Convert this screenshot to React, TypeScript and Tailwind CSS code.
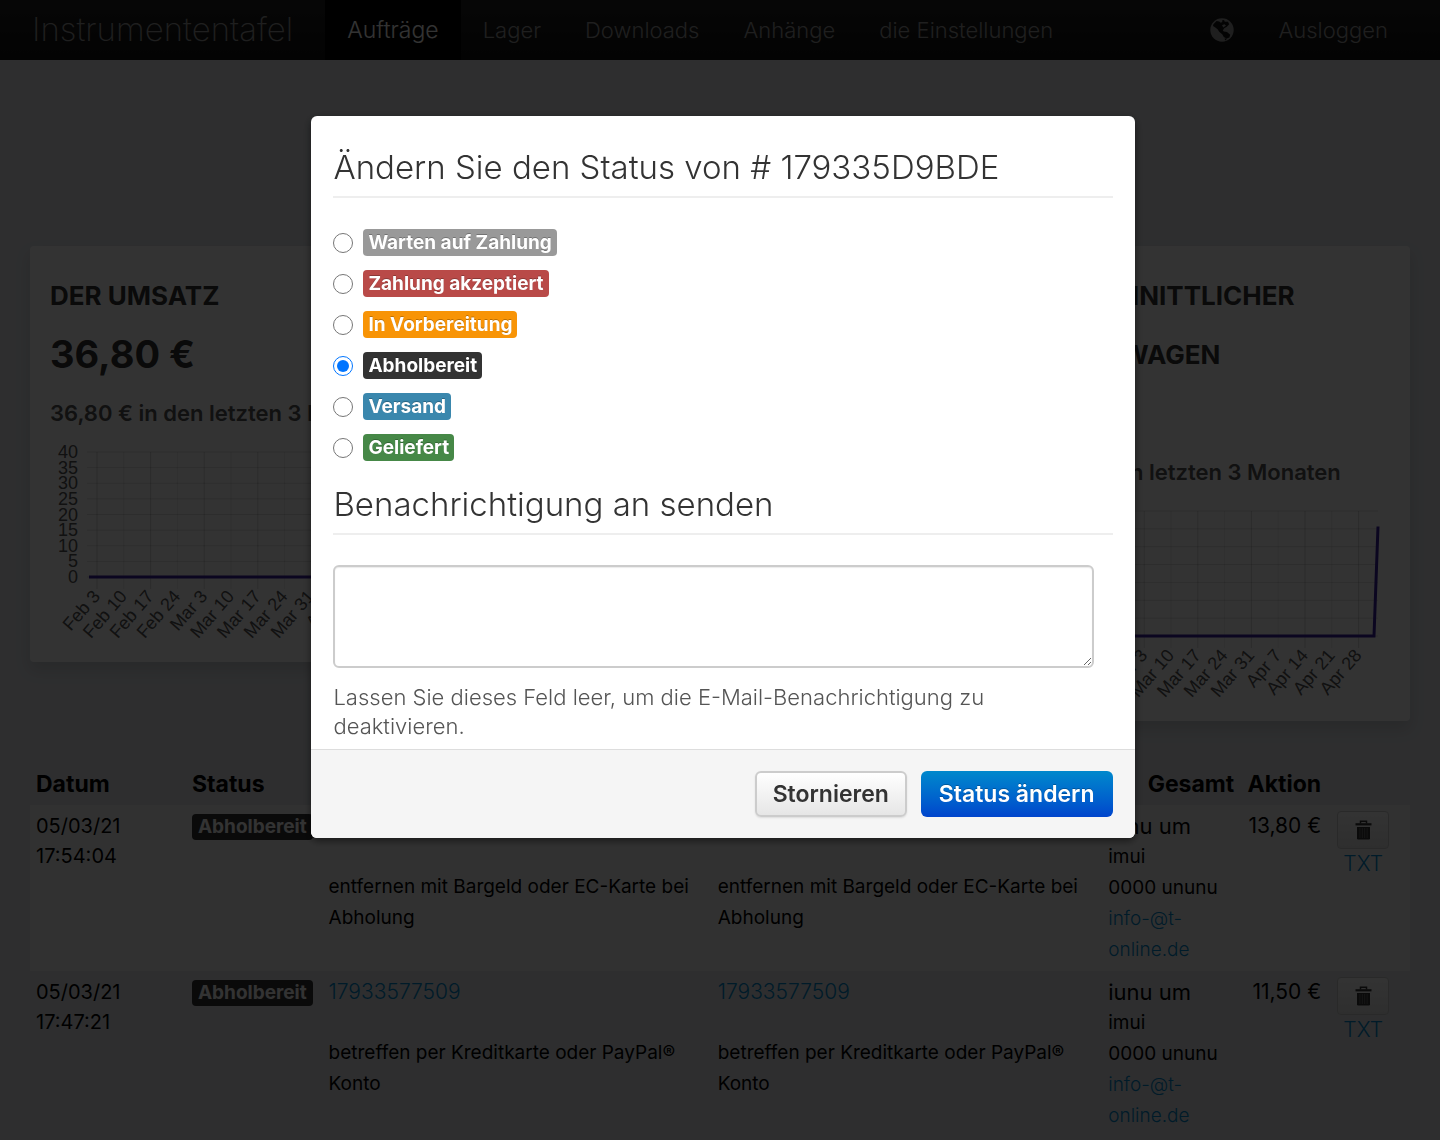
import { useState } from "react";

const navItems = ["Lager", "Downloads", "Anhänge", "die Einstellungen"];

const statuses = [
  { label: "Warten auf Zahlung", color: "bg-[#999999]" },
  { label: "Zahlung akzeptiert", color: "bg-[#b94a48]" },
  { label: "In Vorbereitung", color: "bg-[#f89406]" },
  { label: "Abholbereit", color: "bg-[#333333]" },
  { label: "Versand", color: "bg-[#3a87ad]" },
  { label: "Geliefert", color: "bg-[#468847]" },
];

const weeks = [
  "Feb 3", "Feb 10", "Feb 17", "Feb 24", "Mar 3", "Mar 10", "Mar 17",
  "Mar 24", "Mar 31", "Apr 7", "Apr 14", "Apr 21", "Apr 28",
];

const orders = [
  {
    date: "05/03/21",
    time: "17:54:04",
    id: "179335D9BDE",
    note: "entfernen mit Bargeld oder EC-Karte bei Abholung",
    total: "13,80 €",
  },
  {
    date: "05/03/21",
    time: "17:47:21",
    id: "17933577509",
    note: "betreffen per Kreditkarte oder PayPal® Konto",
    total: "11,50 €",
  },
];

function GlobeIcon() {
  return (
    <svg viewBox="0 0 24 24" className="size-6" aria-hidden="true">
      <circle cx="12" cy="12" r="11.7" fill="#999" />
      <path
        fill="#111"
        d="M3.4 6.2 6.6 3l2.6.6 1.6 1.2 1.6-.8-.4-1.6 2-.4.8 1.8 3.2 0 1.2 2.4-2.4 2.6-2.6 1.4-1.4 2.4 1 1 3.2.4 3.2 2.8-.8 2.6-2.8 1.2-2.8-1.6-1.6-2.8-3-2.4-1.6-2.6-2.6-2L3 8Z"
      />
      <path fill="#111" d="m14.6 20.4 2.6.2-2 1.8Z" />
      <path fill="#999" d="m12 7.2 2.4-1 1.6 1.2-2.6 2Z" />
    </svg>
  );
}

function TrashIcon() {
  return (
    <svg viewBox="0 0 17 20" className="h-5 w-[17px]" fill="none" stroke="#333" aria-hidden="true">
      <path d="M5.5 3.5V1.2h6v2.3" strokeWidth="1.5" />
      <path d="M.5 4.3h16" strokeWidth="2.2" />
      <path d="M2 7h13v11.2q0 1.3-1.3 1.3H3.3Q2 19.5 2 18.2Z" fill="#333" stroke="none" />
      <path d="M4.9 8v10M7.3 8v10M9.7 8v10M12.1 8v10" stroke="#777" strokeWidth=".8" />
    </svg>
  );
}

function Chart({ max, step, peak }: { max: number; step: number; peak: number }) {
  const base = 134;
  const top = 9;
  const y = (v: number) => base - (v / max) * (base - top);
  const ticks = Array.from({ length: max / step + 1 }, (_, i) => i * step);
  return (
    <svg
      viewBox="0 0 400 199"
      className="block w-full font-['Liberation_Sans',sans-serif] text-[18px]"
      role="img"
      aria-label="Verlauf der letzten 3 Monate"
    >
      {ticks.map((t) => (
        <g key={t}>
          <line x1="37" x2="388" y1={y(t)} y2={y(t)} stroke="#000" strokeOpacity=".12" />
          <text x="28" y={y(t) + 6} textAnchor="end" fill="#545454">{t}</text>
        </g>
      ))}
      {weeks.map((w, i) => {
        const x = 47 + i * 26.8;
        return (
          <g key={w}>
            <line x1={x} x2={x} y1={top} y2="146" stroke="#000" strokeOpacity={i % 2 ? ".08" : ".16"} />
            <text textAnchor="end" fill="#545454" transform={`translate(${x + 4} 154) rotate(-49)`}>{w}</text>
          </g>
        );
      })}
      <polyline points={`39,${base} 384,${base} 388,${y(peak)}`} fill="none" stroke="#3b1f9e" strokeWidth="3" />
    </svg>
  );
}

function Card({ title, value, chart }: { title: string; value: string; chart: React.ReactNode }) {
  return (
    <section className="rounded bg-white p-5 shadow-[0_8px_16px_rgba(0,0,0,0.12)]">
      <h2 className="text-[26px] leading-[59px] font-bold text-[#333]">{title}</h2>
      <p className="text-[38px] leading-[59px] font-bold text-[#333]">{value}</p>
      <p className="text-[22px] leading-[59px] font-semibold whitespace-nowrap text-[#555]">
        {value && "36,80 € in den letzten 3 Monaten"}
      </p>
      {chart}
    </section>
  );
}

export default function App() {
  const [status, setStatus] = useState("Abholbereit");
  return (
    <div className="min-h-screen bg-[#e3e6eb] font-['Inter',sans-serif] text-black">
      <header className="flex h-[60px] items-center bg-linear-to-b from-[#222] to-[#111] px-2.5 text-[22px] font-light text-[#999]">
        <a href="#" className="pr-8 pl-[22px] text-[33px] font-extralight">Instrumententafel</a>
        <nav className="flex flex-1 items-center">
          <a href="#" className="bg-black px-[22px] text-[23px] leading-[60px] text-white">Aufträge</a>
          {navItems.map((n) => (
            <a key={n} href="#" className="px-[22px] leading-[60px]">{n}</a>
          ))}
        </nav>
        <a href="#" aria-label="Sprache" className="px-[22px]"><GlobeIcon /></a>
        <a href="#" className="px-[22px] pr-[42px]">Ausloggen</a>
      </header>

      <main className="px-[30px] pt-[186px]">
        <div className="grid grid-cols-3 items-start gap-[30px]">
          <Card title="DER UMSATZ" value="36,80 €" chart={<Chart max={40} step={5} peak={36.8} />} />
          <Card title="" value="" chart={null} />
          <Card
            title="DURCHSCHNITTLICHER EINKAUFSWAGEN"
            value="18,40 €"
            chart={<Chart max={21} step={3} peak={18.4} />}
          />
        </div>

        <table className="mt-[42px] w-full table-fixed text-[21px] leading-[30px]">
          <colgroup>
            <col className="w-[11.3%]" />
            <col className="w-[9.9%]" />
            <col className="w-[28.2%]" />
            <col className="w-[28.3%]" />
            <col className="w-[10%]" />
            <col className="w-[6.3%]" />
            <col />
          </colgroup>
          <thead>
            <tr className="text-left text-[23px] font-bold">
              <th className="px-1.5 py-1.5">Datum</th>
              <th className="px-1.5 py-1.5">Status</th>
              <th />
              <th />
              <th className="px-1.5 py-1.5 text-right">Gesamt</th>
              <th className="px-1.5 py-1.5 text-right">Aktion</th>
              <th />
            </tr>
          </thead>
          <tbody>
            {orders.map((o) => (
              <tr key={o.id} className="align-top odd:bg-[#f6f6f6]">
                <td className="px-1.5 py-1.5 text-[20px]">{o.date}<br />{o.time}</td>
                <td className="px-1.5 py-1.5">
                  <span className="inline-block rounded bg-[#333] px-1.5 text-[19px] leading-[26px] font-bold text-white">Abholbereit</span>
                </td>
                {[0, 1].map((i) => (
                  <td key={i} className="px-1.5 py-1.5">
                    <a href="#" className="block pb-[30px] font-light text-[#0088cc]">{o.id}</a>
                    <p className="text-[19px] leading-[31px]">{o.note}</p>
                  </td>
                ))}
                <td className="px-1.5 py-1.5 text-[22px]">
                  iunu um
                  <p className="text-[19px] leading-[31px]">
                    imui<br />0000 ununu<br />
                    <a href="#" className="font-light text-[#0088cc]">info-@t-<br />online.de</a>
                  </p>
                </td>
                <td className="px-1.5 py-1.5 text-right whitespace-nowrap">{o.total}</td>
                <td className="px-2.5 py-1.5">
                  <div className="flex w-[52px] flex-col items-center">
                    <button
                      type="button"
                      aria-label="Löschen"
                      className="flex h-[38px] w-full items-center justify-center rounded border border-[#ccc] bg-linear-to-b from-white to-[#e6e6e6]"
                    >
                      <TrashIcon />
                    </button>
                    <a href="#" className="font-light text-[#0088cc]">TXT</a>
                  </div>
                </td>
              </tr>
            ))}
          </tbody>
        </table>
      </main>

      <div className="fixed inset-0 bg-black/80 pt-[116px] pl-1.5">
        <form
          role="dialog"
          aria-modal="true"
          aria-labelledby="dialog-title"
          className="mx-auto w-[57.4%] overflow-hidden rounded-md bg-white text-[#333] shadow-[0_3px_9px_rgba(0,0,0,0.5)]"
          onSubmit={(e) => e.preventDefault()}
        >
          <div className="px-[22px] pt-[30px] pb-2">
            <h1 id="dialog-title" className="border-b-2 border-[#eee] pb-2 text-[33px] leading-[42px] font-light">
              Ändern Sie den Status von # 179335D9BDE
            </h1>
            <div className="mt-[31px] flex flex-col gap-3.5">
              {statuses.map((s) => (
                <label key={s.label} className="flex items-center gap-2.5">
                  <input
                    type="radio"
                    name="status"
                    className="m-0 size-5 accent-[#0075ff]"
                    checked={status === s.label}
                    onChange={() => setStatus(s.label)}
                  />
                  <span className={`${s.color} rounded px-[5px] text-[19px] leading-[27px] font-bold text-white [text-shadow:0_-1px_0_rgba(0,0,0,0.25)]`}>
                    {s.label}
                  </span>
                </label>
              ))}
            </div>
            <h2 id="notify" className="mt-4 border-b-2 border-[#eee] pb-0.5 text-[33px] leading-[54px] font-light">
              Benachrichtigung an senden
            </h2>
            <textarea
              aria-labelledby="notify"
              className="mt-[30px] block h-[103px] w-[calc(100%-19px)] rounded-md border-2 border-[#ccc] shadow-[inset_0_1px_1px_rgba(0,0,0,0.08)]"
            />
            <p className="mt-[15px] max-w-[680px] text-[22px] leading-[29px] font-light text-[#555]">
              Lassen Sie dieses Feld leer, um die E-Mail-Benachrichtigung zu deaktivieren.
            </p>
          </div>
          <div className="flex justify-end gap-3.5 border-t border-[#ddd] bg-[#f5f5f5] px-[22px] py-[21px] text-[23px] font-semibold">
            <button type="button" className="h-[46px] rounded-md border-2 border-[#ccc] bg-linear-to-b from-white to-[#e6e6e6] px-4 shadow-[0_1px_2px_rgba(0,0,0,0.1)]">
              Stornieren
            </button>
            <button type="submit" className="h-[46px] rounded-md bg-linear-to-b from-[#0088cc] to-[#0044cc] px-[18px] text-white [text-shadow:0_-1px_0_rgba(0,0,0,0.25)]">
              Status ändern
            </button>
          </div>
        </form>
      </div>
    </div>
  );
}
